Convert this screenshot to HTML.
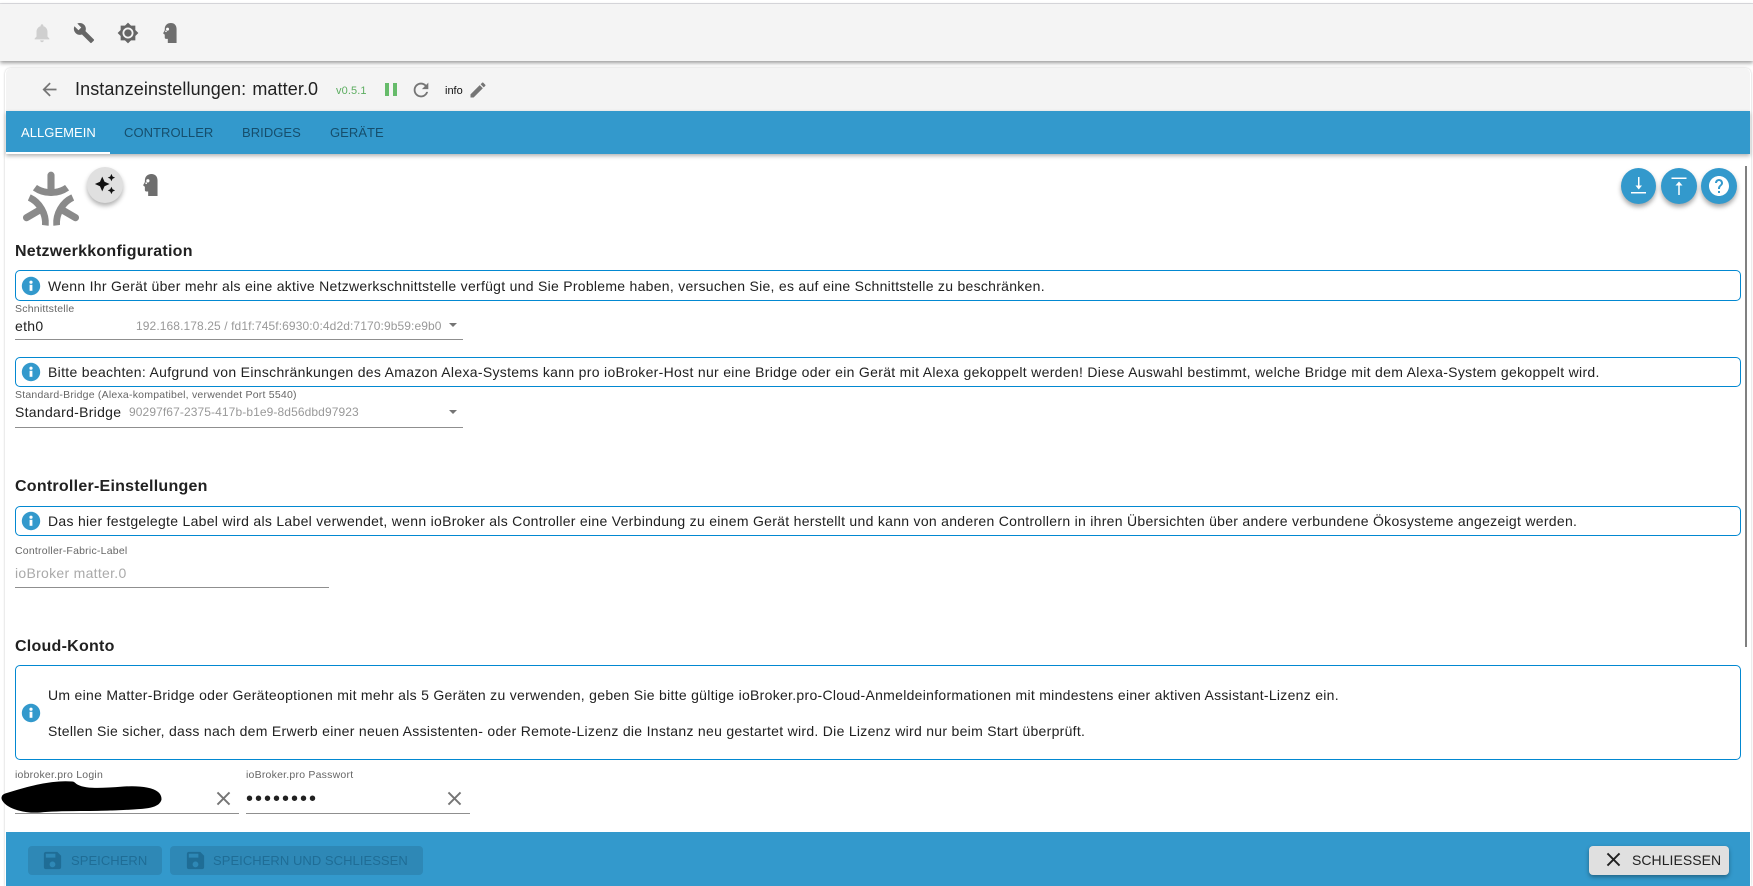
<!DOCTYPE html>
<html lang="de"><head><meta charset="utf-8"><title>Instanzeinstellungen</title>
<style>
*{box-sizing:border-box}
html,body{margin:0;padding:0;width:1753px;height:886px;overflow:hidden;background:#fff;font-family:"Liberation Sans",sans-serif;color:#212121}
.a{position:absolute}
.t{position:absolute;line-height:20px;height:20px;white-space:nowrap;font-size:14px;letter-spacing:.29px}
.h{font-weight:700;font-size:16px;letter-spacing:.25px}
.l{font-size:10.5px;color:#666;letter-spacing:.22px}
.g{font-size:12px;color:#999;letter-spacing:.1px}
.box{position:absolute;left:15px;width:1726px;border:1px solid #0288d1;border-radius:5px;background:#fff}
.u{position:absolute;height:1px;background:#8f8f8f}
.tab{color:#164e6c;font-size:13px;letter-spacing:.05px}
.f{font-size:13px;letter-spacing:.05px}
svg{position:absolute;display:block}
.btn{position:absolute;border-radius:4px}
</style></head><body>
<div class="a" style="left:0;top:3px;width:1753px;height:1px;background:#dedee2"></div>
<div class="a" style="left:0;top:4px;width:1753px;height:57px;background:#f4f4f4;box-shadow:0 2px 4px rgba(0,0,0,.4)"></div>

<svg style="left:31px;top:22px" width="22" height="22" viewBox="0 0 24 24" fill="#cfcfcf"><path d="M12 22c1.100 0 2-.9 2-2h-4c0 1.100.89 2 2 2zm6-6v-5c0-3.070-1.640-5.640-4.500-6.320V4c0-.83-.67-1.500-1.500-1.500s-1.500.67-1.500 1.500v.68C7.630 5.360 6 7.920 6 11v5l-2 2v1h16v-1l-2-2z"/></svg>
<svg style="left:73px;top:22px" width="22" height="22" viewBox="0 0 24 24" fill="#666"><path d="M22.700 19l-9.100-9.100c.9-2.300.4-5-1.500-6.900-2-2-5-2.400-7.400-1.300L9 6 6 9 1.600 4.700C.4 7.100.9 10.100 2.900 12.100c1.900 1.900 4.600 2.400 6.900 1.500l9.100 9.100c.4.4 1 .4 1.400 0l2.300-2.300c.5-.4.5-1.100.1-1.400z"/></svg>
<svg style="left:117px;top:22px" width="22" height="22" viewBox="0 0 24 24" fill="#666"><path d="M20 8.690V4h-4.690L12 .69 8.690 4H4v4.690L.69 12 4 15.310V20h4.690L12 23.310 15.310 20H20v-4.690L23.310 12 20 8.690zM12 18c-3.310 0-6-2.690-6-6s2.690-6 6-6 6 2.690 6 6-2.690 6-6 6zm0-10c-2.210 0-4 1.790-4 4s1.790 4 4 4 4-1.790 4-4-1.790-4-4-4z"/></svg>
<svg style="left:163px;top:23px" width="14" height="20" viewBox="0 0 16 22" preserveAspectRatio="none"><path fill="#6e6e6e" d="M9 0C13 0 15.500 2.500 15.500 6.500V22H5.500V17.500H3.500C2.500 17.500 2 16.800 2 16V12.800L.5 11.800C0 11.300.5 10.500 1 9.800L2 8V6.500C2 2.500 5 0 9 0Z"/><circle cx="5.200" cy="6.800" r="1.700" fill="#fff"/><circle cx="3.400" cy="9.200" r=".9" fill="#fff"/></svg>

<div class="a" style="left:5px;top:68px;width:1746px;height:818px;background:#fff;border-radius:6px 6px 0 0;box-shadow:0 0 2px rgba(0,0,0,.22)"></div>
<div class="a" style="left:6px;top:68px;width:1744px;height:43px;background:#f4f4f4;border-radius:6px 6px 0 0"></div>

<svg style="left:39px;top:79px" width="21" height="21" viewBox="0 0 24 24" fill="#757575"><path d="M20 11H7.830l5.590-5.590L12 4l-8 8 8 8 1.410-1.410L7.830 13H20v-2z"/></svg>
<div class="t" style="left:75px;top:79px;font-size:18px;letter-spacing:.1px;word-spacing:1px">Instanzeinstellungen: matter.0</div>
<div class="t" style="left:336px;top:81px;font-size:11px;color:#5cad60;letter-spacing:.1px">v0.5.1</div>
<div class="a" style="left:385px;top:83px;width:4px;height:13px;background:#66bb6a"></div>
<div class="a" style="left:393px;top:83px;width:4px;height:13px;background:#66bb6a"></div>
<svg style="left:410px;top:79px" width="22" height="22" viewBox="0 0 24 24" fill="#757575"><path d="M17.650 6.350C16.200 4.900 14.210 4 12 4c-4.420 0-7.990 3.580-7.990 8s3.570 8 7.990 8c3.730 0 6.840-2.550 7.730-6h-2.080c-.82 2.330-3.040 4-5.650 4-3.310 0-6-2.690-6-6s2.690-6 6-6c1.660 0 3.140.69 4.220 1.780L13 11h7V4l-2.350 2.350z"/></svg>
<div class="t" style="left:445px;top:81px;font-size:11px;letter-spacing:0;color:#111">info</div>
<svg style="left:468px;top:80px" width="20" height="20" viewBox="0 0 24 24" fill="#757575"><path d="M3 17.250V21h3.750L17.810 9.940l-3.750-3.750L3 17.250zM20.710 7.040c.39-.39.39-1.020 0-1.410l-2.340-2.340c-.39-.39-1.020-.39-1.410 0l-1.830 1.830 3.750 3.750 1.830-1.830z"/></svg>

<div class="a" style="left:6px;top:111px;width:1744px;height:43px;background:#3399cc;box-shadow:0 2px 4px rgba(0,0,0,.3)"></div>
<div class="a" style="left:6px;top:152px;width:104px;height:2px;background:#fff"></div>
<div class="t tab" style="left:21px;top:122.500px;color:#fff">ALLGEMEIN</div>
<div class="t tab" style="left:124px;top:122.500px">CONTROLLER</div>
<div class="t tab" style="left:242px;top:122.500px">BRIDGES</div>
<div class="t tab" style="left:330px;top:122.500px">GERÄTE</div>

<svg style="left:20px;top:170px" width="62" height="60" viewBox="20 170 62 60" fill="#8a8a8a" stroke="#8a8a8a" stroke-width=".7" stroke-linejoin="round">
<path d="M47.800 175.200a3.200 3.200 0 0 1 6.400 0V189.300c3.800-.4 7.600-1.700 10.800-3.900l3.600 4.900c-5 3.500-11 5.400-17.600 5.400s-12.600-1.900-17.600-5.400l3.600-4.900c3.200 2.200 7 3.500 10.800 3.900z"/>
<path transform="rotate(120 51 203.500)" d="M47.800 175.200a3.200 3.200 0 0 1 6.400 0V189.300c3.800-.4 7.600-1.700 10.800-3.900l3.600 4.900c-5 3.500-11 5.400-17.600 5.400s-12.600-1.900-17.600-5.400l3.600-4.900c3.200 2.200 7 3.500 10.800 3.900z"/>
<path transform="rotate(240 51 203.500)" d="M47.800 175.200a3.200 3.200 0 0 1 6.400 0V189.300c3.800-.4 7.600-1.700 10.800-3.900l3.600 4.900c-5 3.500-11 5.400-17.600 5.400s-12.600-1.900-17.600-5.400l3.600-4.900c3.200 2.200 7 3.500 10.800 3.900z"/>
</svg>
<div class="a" style="left:87px;top:167px;width:36px;height:36px;border-radius:50%;background:#e0e0e0;box-shadow:0 3px 5px rgba(0,0,0,.3)"></div>
<svg style="left:94px;top:173px" width="22" height="22" viewBox="0 0 24 24" fill="#111"><path d="M19 9l1.250-2.750L23 5l-2.750-1.250L19 1l-1.250 2.750L15 5l2.750 1.250L19 9zm-7.500.5L9 4 6.500 9.500 1 12l5.500 2.500L9 20l2.500-5.500L17 12l-5.500-2.500zM19 15l-1.250 2.750L15 19l2.750 1.250L19 23l1.250-2.750L23 19l-2.750-1.250L19 15z"/></svg>
<svg style="left:143px;top:174px" width="15" height="22" viewBox="0 0 16 22" preserveAspectRatio="none"><path fill="#6e6e6e" d="M9 0C13 0 15.500 2.500 15.500 6.500V22H5.500V17.500H3.500C2.500 17.500 2 16.800 2 16V12.800L.5 11.800C0 11.300.5 10.500 1 9.800L2 8V6.500C2 2.500 5 0 9 0Z"/><circle cx="5.200" cy="6.800" r="1.700" fill="#fff"/><circle cx="3.400" cy="9.200" r=".9" fill="#fff"/></svg>

<div class="a" style="left:1621px;top:168px;width:35px;height:36px;border-radius:50%;background:#3399cc;box-shadow:0 3px 5px rgba(0,0,0,.35)"></div>
<div class="a" style="left:1661px;top:168px;width:36px;height:36px;border-radius:50%;background:#3399cc;box-shadow:0 3px 5px rgba(0,0,0,.35)"></div>
<div class="a" style="left:1701px;top:168px;width:36px;height:36px;border-radius:50%;background:#3399cc;box-shadow:0 3px 5px rgba(0,0,0,.35)"></div>
<svg style="left:1621px;top:168px" width="36" height="36" viewBox="0 0 36 36" fill="#fff"><rect x="10" y="24" width="15" height="1.500"/><rect x="17" y="9" width="1.500" height="10"/><path d="M14.500 17.500h6.500l-3.250 4z"/></svg>
<svg style="left:1661px;top:168px" width="36" height="36" viewBox="0 0 36 36" fill="#fff"><rect x="10.500" y="9.500" width="15" height="1.500"/><rect x="17.250" y="16" width="1.500" height="11"/><path d="M14.500 17.500h7l-3.500-4z"/></svg>
<svg style="left:1707px;top:174px" width="24" height="24" viewBox="0 0 24 24" fill="#fff"><path d="M12 2C6.480 2 2 6.480 2 12s4.480 10 10 10 10-4.480 10-10S17.520 2 12 2zm1 17h-2v-2h2v2zm2.070-7.750l-.9.920C13.450 12.900 13 13.500 13 15h-2v-.5c0-1.100.45-2.100 1.170-2.830l1.240-1.260c.37-.36.59-.86.59-1.410 0-1.100-.9-2-2-2s-2 .9-2 2H8c0-2.210 1.790-4 4-4s4 1.790 4 4c0 .88-.36 1.680-.93 2.250z"/></svg>
<div class="a" style="left:1745px;top:166px;width:2px;height:481px;background:#808080"></div>

<div class="t h" style="left:15px;top:242px">Netzwerkkonfiguration</div>
<div class="box" style="top:270px;height:31px"></div>
<svg style="left:21px;top:276px" width="20" height="20" viewBox="0 0 20 20"><circle cx="10" cy="10" r="9.200" fill="#3399cc"/><rect x="8.600" y="8.800" width="2.800" height="6" fill="#fff"/><circle cx="10" cy="6.200" r="1.600" fill="#fff"/></svg>
<div class="t" style="left:48px;top:276px;letter-spacing:.28px">Wenn Ihr Gerät über mehr als eine aktive Netzwerkschnittstelle verfügt und Sie Probleme haben, versuchen Sie, es auf eine Schnittstelle zu beschränken.</div>
<div class="t l" style="left:15px;top:299px">Schnittstelle</div>
<div class="t" style="left:15px;top:316px">eth0</div>
<div class="t g" style="left:136px;top:316px">192.168.178.25 / fd1f:745f:6930:0:4d2d:7170:9b59:e9b0</div>
<svg style="left:446px;top:318px" width="14" height="14" viewBox="0 0 14 14" fill="#757575"><path d="M3 5h8L7 9z"/></svg>
<div class="u" style="left:15px;top:339px;width:448px"></div>

<div class="box" style="top:357px;height:30px"></div>
<svg style="left:21px;top:362px" width="20" height="20" viewBox="0 0 20 20"><circle cx="10" cy="10" r="9.200" fill="#3399cc"/><rect x="8.600" y="8.800" width="2.800" height="6" fill="#fff"/><circle cx="10" cy="6.200" r="1.600" fill="#fff"/></svg>
<div class="t" style="left:48px;top:362px;letter-spacing:.31px">Bitte beachten: Aufgrund von Einschränkungen des Amazon Alexa-Systems kann pro ioBroker-Host nur eine Bridge oder ein Gerät mit Alexa gekoppelt werden! Diese Auswahl bestimmt, welche Bridge mit dem Alexa-System gekoppelt wird.</div>
<div class="t l" style="left:15px;top:385px">Standard-Bridge (Alexa-kompatibel, verwendet Port 5540)</div>
<div class="t" style="left:15px;top:402px">Standard-Bridge</div>
<div class="t g" style="left:129px;top:402px">90297f67-2375-417b-b1e9-8d56dbd97923</div>
<svg style="left:446px;top:405px" width="14" height="14" viewBox="0 0 14 14" fill="#757575"><path d="M3 5h8L7 9z"/></svg>
<div class="u" style="left:15px;top:427px;width:448px"></div>

<div class="t h" style="left:15px;top:477px">Controller-Einstellungen</div>
<div class="box" style="top:506px;height:30px"></div>
<svg style="left:21px;top:511px" width="20" height="20" viewBox="0 0 20 20"><circle cx="10" cy="10" r="9.200" fill="#3399cc"/><rect x="8.600" y="8.800" width="2.800" height="6" fill="#fff"/><circle cx="10" cy="6.200" r="1.600" fill="#fff"/></svg>
<div class="t" style="left:48px;top:511px">Das hier festgelegte Label wird als Label verwendet, wenn ioBroker als Controller eine Verbindung zu einem Gerät herstellt und kann von anderen Controllern in ihren Übersichten über andere verbundene Ökosysteme angezeigt werden.</div>
<div class="t l" style="left:15px;top:541px">Controller-Fabric-Label</div>
<div class="t" style="left:15px;top:563px;color:#aaa">ioBroker matter.0</div>
<div class="u" style="left:15px;top:587px;width:314px"></div>

<div class="t h" style="left:15px;top:637px">Cloud-Konto</div>
<div class="box" style="top:665px;height:95px"></div>
<svg style="left:21px;top:703px" width="20" height="20" viewBox="0 0 20 20"><circle cx="10" cy="10" r="9.200" fill="#3399cc"/><rect x="8.600" y="8.800" width="2.800" height="6" fill="#fff"/><circle cx="10" cy="6.200" r="1.600" fill="#fff"/></svg>
<div class="t" style="left:48px;top:685px">Um eine Matter-Bridge oder Geräteoptionen mit mehr als 5 Geräten zu verwenden, geben Sie bitte gültige ioBroker.pro-Cloud-Anmeldeinformationen mit mindestens einer aktiven Assistant-Lizenz ein.</div>
<div class="t" style="left:48px;top:721px">Stellen Sie sicher, dass nach dem Erwerb einer neuen Assistenten- oder Remote-Lizenz die Instanz neu gestartet wird. Die Lizenz wird nur beim Start überprüft.</div>

<div class="t l" style="left:15px;top:765px">iobroker.pro Login</div>
<div class="t l" style="left:246px;top:765px">ioBroker.pro Passwort</div>
<svg style="left:0;top:778px" width="170" height="38" viewBox="0 0 170 38"><path d="M6 20C22 15 50 6 72 8C80 16 100 15 124 13C140 12 157 14 157 21C155 27 135 27 110 28C85 29 60 28 40 30C26 31 10 27 6 20Z" fill="#000" stroke="#000" stroke-width="9" stroke-linejoin="round"/></svg>
<div class="t" style="left:246px;top:789px;font-size:20px;letter-spacing:2px;color:#212121">••••••••</div>
<svg style="left:212px;top:787px" width="23" height="23" viewBox="0 0 24 24" fill="#757575"><path d="M19 6.410L17.590 5 12 10.590 6.410 5 5 6.410 10.590 12 5 17.590 6.410 19 12 13.410 17.590 19 19 17.590 13.410 12 19 6.410z"/></svg>
<svg style="left:443px;top:787px" width="23" height="23" viewBox="0 0 24 24" fill="#757575"><path d="M19 6.410L17.590 5 12 10.590 6.410 5 5 6.410 10.590 12 5 17.590 6.410 19 12 13.410 17.590 19 19 17.590 13.410 12 19 6.410z"/></svg>
<div class="u" style="left:15px;top:813px;width:224px"></div>
<div class="u" style="left:246px;top:813px;width:224px"></div>

<div class="a" style="left:6px;top:832px;width:1744px;height:54px;background:#3399cc"></div>
<div class="btn" style="left:28px;top:846px;width:134px;height:29px;background:#2e88b6"></div>
<div class="btn" style="left:170px;top:846px;width:253px;height:29px;background:#2e88b6"></div>
<svg style="left:41px;top:849px" width="23" height="23" viewBox="0 0 24 24" fill="#1f6d96"><path d="M17 3H5c-1.110 0-2 .9-2 2v14c0 1.100.89 2 2 2h14c1.100 0 2-.9 2-2V7l-4-4zm-5 16c-1.660 0-3-1.340-3-3s1.340-3 3-3 3 1.340 3 3-1.340 3-3 3zm3-10H5V5h10v4z"/></svg>
<svg style="left:184px;top:849px" width="23" height="23" viewBox="0 0 24 24" fill="#1f6d96"><path d="M17 3H5c-1.110 0-2 .9-2 2v14c0 1.100.89 2 2 2h14c1.100 0 2-.9 2-2V7l-4-4zm-5 16c-1.660 0-3-1.340-3-3s1.340-3 3-3 3 1.340 3 3-1.340 3-3 3zm3-10H5V5h10v4z"/></svg>
<div class="t f" style="left:71px;top:851px;color:#1f6d96">SPEICHERN</div>
<div class="t f" style="left:213px;top:851px;color:#1f6d96">SPEICHERN UND SCHLIESSEN</div>
<div class="btn" style="left:1589px;top:846px;width:140px;height:29px;background:#e0e0e0;box-shadow:0 2px 4px rgba(0,0,0,.35)"></div>
<svg style="left:1602px;top:848px" width="23" height="23" viewBox="0 0 24 24" fill="#212121"><path d="M19 6.410L17.590 5 12 10.590 6.410 5 5 6.410 10.590 12 5 17.590 6.410 19 12 13.410 17.590 19 19 17.590 13.410 12 19 6.410z"/></svg>
<div class="t" style="left:1632px;top:850px;color:#212121;letter-spacing:.05px">SCHLIESSEN</div>
</body></html>
